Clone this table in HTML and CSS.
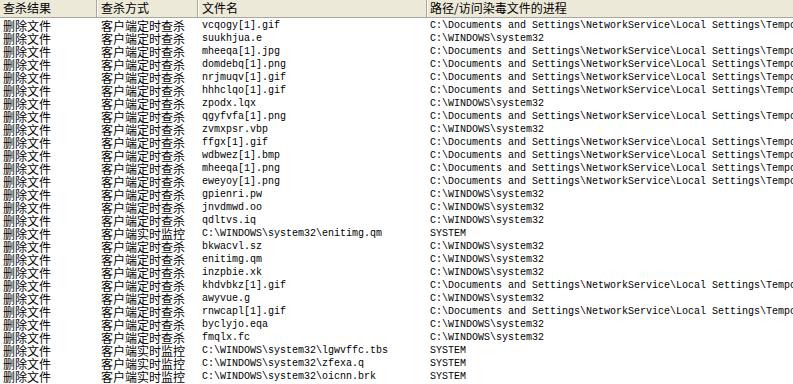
FILE: index.html
```html
<!DOCTYPE html>
<html lang="zh-CN">
<head>
  <meta charset="UTF-8" />
  <title>查杀结果</title>
  <link rel="stylesheet" href="styles.css">
</head>
<body>
  <div class="list">
    <div class="row head">
      <div class="cell">查杀结果</div>
      <div class="cell">查杀方式</div>
      <div class="cell">文件名</div>
      <div class="cell">路径/访问染毒文件的进程</div>
    </div>
    <div class="rows" id="rows"></div>
  </div>

  <script>
    const docs = "C:\\Documents and Settings\\NetworkService\\Local Settings\\Temporary Internet Files\\Content.IE5";
    const win = "C:\\WINDOWS\\system32";
    const sched = "客户端定时查杀";
    const live = "客户端实时监控";

    const items = [
      [sched, "vcqogy[1].gif", docs],
      [sched, "suukhjua.e", win],
      [sched, "mheeqa[1].jpg", docs],
      [sched, "domdebq[1].png", docs],
      [sched, "nrjmuqv[1].gif", docs],
      [sched, "hhhclqo[1].gif", docs],
      [sched, "zpodx.lqx", win],
      [sched, "qgyfvfa[1].png", docs],
      [sched, "zvmxpsr.vbp", win],
      [sched, "ffgx[1].gif", docs],
      [sched, "wdbwez[1].bmp", docs],
      [sched, "mheeqa[1].png", docs],
      [sched, "eweyoy[1].png", docs],
      [sched, "gpienri.pw", win],
      [sched, "jnvdmwd.oo", win],
      [sched, "qdltvs.iq", win],
      [live, "C:\\WINDOWS\\system32\\enitimg.qm", "SYSTEM"],
      [sched, "bkwacvl.sz", win],
      [sched, "enitimg.qm", win],
      [sched, "inzpbie.xk", win],
      [sched, "khdvbkz[1].gif", docs],
      [sched, "awyvue.g", win],
      [sched, "rnwcapl[1].gif", docs],
      [sched, "byclyjo.eqa", win],
      [sched, "fmqlx.fc", win],
      [live, "C:\\WINDOWS\\system32\\lgwvffc.tbs", "SYSTEM"],
      [live, "C:\\WINDOWS\\system32\\zfexa.q", "SYSTEM"],
      [live, "C:\\WINDOWS\\system32\\oicnn.brk", "SYSTEM"]
    ];

    const rows = document.getElementById("rows");
    items.forEach(function (it) {
      const row = document.createElement("div");
      row.className = "row";
      row.innerHTML =
        '<div class="cell">删除文件</div>' +
        '<div class="cell">' + it[0] + '</div>' +
        '<div class="cell mono"></div>' +
        '<div class="cell mono"></div>';
      row.children[2].textContent = it[1];
      row.children[3].textContent = it[2];
      rows.appendChild(row);
    });
  </script>
</body>
</html>
```

FILE: styles.css
```css
html, body {
  margin: 0;
  padding: 0;
  background: #fff;
  color: #000;
  font-family: "Noto Sans CJK SC", sans-serif;
  font-size: 12px;
  overflow: hidden;
}

.list {
  width: 793px;
}

.row {
  display: grid;
  grid-template-columns: 97px 101px 229px 1fr;
  height: 13px;
  line-height: 13px;
  white-space: nowrap;
}

.cell {
  padding-left: 3px;
}

.row .cell:nth-child(2),
.row .cell:nth-child(3) {
  padding-left: 4px;
}

.mono {
  font-family: "Liberation Mono", monospace;
  font-size: 10px;
}

.head {
  height: 17px;
  line-height: 16px;
  background: #ece9d8;
  border-bottom: 1px solid #aca899;
  margin-bottom: 1px;
}

.head .cell {
  border-right: 1px solid #aca899;
  box-shadow: inset 1px 0 #fff;
}

.head .cell:first-child {
  box-shadow: none;
}

.head .cell:last-child {
  border-right: none;
}
```
